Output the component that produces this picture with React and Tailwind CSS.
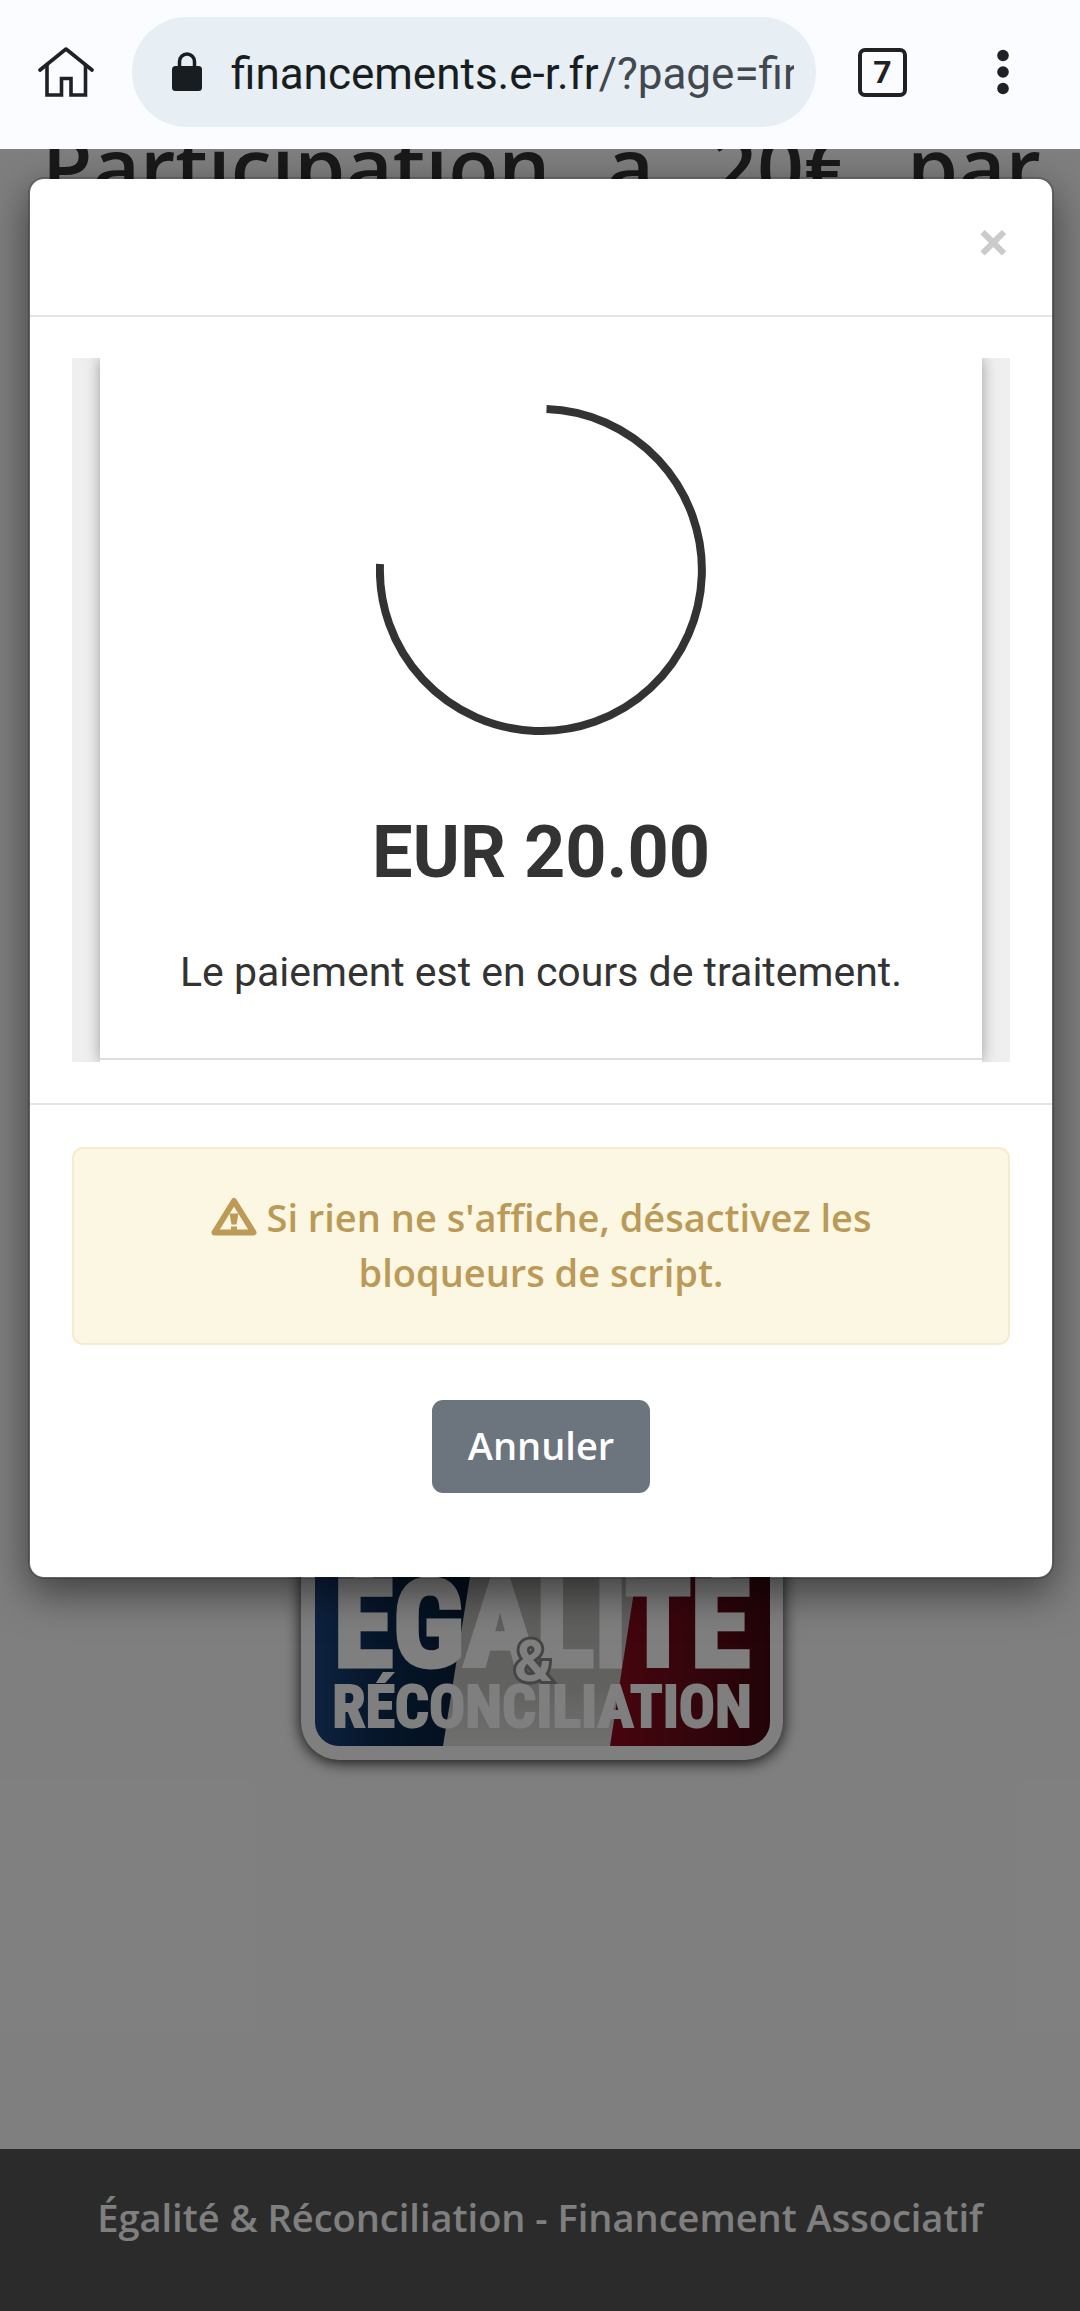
const sans = "font-['Open_Sans','Noto_Sans',sans-serif]";

function HomeIcon() {
  return (
    <svg className="h-14 w-14" viewBox="0 0 56 56" fill="none" stroke="#1f2123" strokeWidth="3.6" strokeLinecap="round" strokeLinejoin="round">
      <path d="M2 26 28 5 54 26" />
      <path d="M9 21V51H23.500V34.500H33V51H47.500V21" strokeLinecap="butt" strokeLinejoin="miter" />
    </svg>
  );
}

function LockIcon() {
  return (
    <svg className="h-10 w-8 shrink-0" viewBox="0 0 32 40" fill="none">
      <path d="M8.500 16V9.500a7.500 7.500 0 0 1 15 0V16" stroke="#171d20" strokeWidth="3.500" />
      <rect x="1" y="14" width="30" height="25" rx="3.500" fill="#171d20" />
    </svg>
  );
}

function MenuDots() {
  return (
    <svg className="h-12 w-3" viewBox="0 0 12 48" fill="#1f2123">
      <circle cx="6" cy="7.500" r="5.800" />
      <circle cx="6" cy="24" r="5.800" />
      <circle cx="6" cy="40.500" r="5.800" />
    </svg>
  );
}

function BrowserBar() {
  return (
    <header className="flex items-start bg-[#fbfcff] pt-[17px] pb-[22px] font-[Roboto,sans-serif]">
      <button type="button" aria-label="Accueil" className="ml-[38px] flex h-[110px] w-14 shrink-0 items-center">
        <HomeIcon />
      </button>
      <button type="button" aria-label="Adresse" className="ml-[38px] flex h-[110px] min-w-0 flex-1 items-center rounded-full bg-[#e7eef4] pr-[22px] pl-[39px]">
        <LockIcon />
        <span className="ml-7 overflow-hidden pt-[3px] text-[44px] leading-[56px] whitespace-nowrap text-[#171d20]">
          financements.e-r.fr<span className="text-[#41484e]">/?page=fir</span>
        </span>
      </button>
      <button type="button" aria-label="Onglets" className="ml-[42px] flex h-[110px] w-[49px] shrink-0 items-center">
        <span className="flex h-[49px] w-full items-center justify-center rounded-[7px] border-4 border-[#1f2123] text-[32px] leading-8 font-bold text-[#1f2123]">7</span>
      </button>
      <button type="button" aria-label="Menu" className="mr-[71px] ml-[90px] flex h-[110px] shrink-0 items-center">
        <MenuDots />
      </button>
    </header>
  );
}

function Logo() {
  return (
    <svg className="h-[260px] w-[482px] drop-shadow-[0_2px_8px_rgba(0,0,0,0.9)]" viewBox="0 0 482 260" role="img" aria-label="Égalité & Réconciliation">
      <defs>
        <linearGradient id="blue" x1="0" x2="1">
          <stop offset="0" stopColor="#1b4480" />
          <stop offset="0.4" stopColor="#0c2c52" />
          <stop offset="1" stopColor="#041c36" />
        </linearGradient>
        <linearGradient id="silver" x1="0" x2="0" y1="0" y2="1">
          <stop offset="0" stopColor="#b8b8b6" />
          <stop offset="0.75" stopColor="#c4c4c2" />
          <stop offset="1" stopColor="#e0e0df" />
        </linearGradient>
        <linearGradient id="red" x1="0" x2="1">
          <stop offset="0" stopColor="#900a1c" />
          <stop offset="0.5" stopColor="#6a0a18" />
          <stop offset="1" stopColor="#420810" />
        </linearGradient>
        <clipPath id="plate">
          <rect x="14" y="14" width="455" height="232" rx="24" />
        </clipPath>
      </defs>
      <rect width="482" height="260" rx="38" fill="#fff" />
      <g clipPath="url(#plate)">
        <rect x="14" y="14" width="455" height="232" fill="url(#silver)" />
        <path d="M14 14H179L142 246H14Z" fill="url(#blue)" />
        <path d="M345 14H469V246H309Z" fill="url(#red)" />
      </g>
      <g fill="#fff" stroke="#fff" fontWeight="700" textAnchor="middle" fontFamily="'Liberation Sans Narrow','Roboto Condensed',Roboto,sans-serif">
        <text x="241" y="166" fontSize="121" strokeWidth="5">ÉGALITÉ</text>
        <text x="241" y="227" fontSize="60" strokeWidth="2">RÉCONCILIATION</text>
        <text x="232" y="181" fontSize="58" stroke="#8a8a88" strokeWidth="6" paintOrder="stroke" fontFamily="Roboto,sans-serif">&amp;</text>
      </g>
    </svg>
  );
}

function Spinner() {
  return (
    <svg className="h-[330px] w-[330px]" viewBox="0 0 330 330" role="img" aria-label="Chargement">
      <path d="M170.500 4.100A161 161 0 1 1 4 159" fill="none" stroke="#333" strokeWidth="8" />
    </svg>
  );
}

function WarningIcon() {
  return (
    <svg className="mr-[10px] inline-block h-[39px] w-[46px] align-[-4px]" viewBox="0 0 46 39">
      <path d="M23 4 42.500 35.500H3.500Z" fill="none" stroke="#bd9a56" strokeWidth="6" strokeLinejoin="round" />
      <path d="M18.500 16.500H27.500L25.500 27.500H20.500ZM20 29.500H26V33H20Z" fill="#bd9a56" />
    </svg>
  );
}

function PaymentDialog() {
  return (
    <div role="dialog" aria-modal="true" aria-label="Paiement" className="rounded-2xl border-2 border-black/20 bg-white bg-clip-padding shadow-[0_14px_41px_rgba(0,0,0,0.5)]">
      <div className="flex justify-end border-b-2 border-[#e5e5e5] px-[42px] pt-[34px] pb-[46px]">
        <button type="button" aria-label="Fermer" className="text-[58px] leading-14 font-bold text-[#cbcbcb]">×</button>
      </div>
      <div className="px-[42px] py-[41px]">
        <section className="overflow-hidden bg-[#efefef] px-7">
          <div className="bg-white pb-[2px] shadow-[0_0_14px_rgba(0,0,0,0.35)]">
            <div className="flex flex-col items-center border-b-2 border-[#ddd] pt-[47px] pb-[58px] font-[Roboto,sans-serif] text-[#333]">
              <Spinner />
              <h2 className="mt-[76px] text-[72px] leading-[84px] font-bold">EUR 20.00</h2>
              <p className="mt-[49px] text-[41px] leading-14">Le paiement est en cours de traitement.</p>
            </div>
          </div>
        </section>
      </div>
      <div className="flex flex-col items-center border-t-2 border-[#e5e5e5] px-[42px] pt-[42px] pb-[84px]">
        <p role="alert" className="w-full rounded-[11px] border-2 border-[#f5ecd0] bg-[#fcf7e3] px-[110px] pt-[41px] pb-[43px] text-center text-[38px] leading-[55px] font-semibold text-[#bb9a58]">
          <WarningIcon />Si rien ne s'affiche, désactivez les bloqueurs de script.
        </p>
        <button type="button" className="mt-[55px] rounded-[11px] bg-[#6c757d] px-9 pt-[18px] pb-5 text-[38px] leading-[55px] font-semibold text-white">Annuler</button>
      </div>
    </div>
  );
}

export default function App() {
  return (
    <div className={`flex min-h-screen flex-col bg-white ${sans}`}>
      <BrowserBar />
      <div className="relative flex flex-1 flex-col overflow-hidden">
        <main className="flex flex-1 flex-col items-center pr-[39px] pl-[42px]">
          <h1 className="w-full text-[82px] leading-8 font-semibold text-[#333] [text-align-last:justify]">Participation à 20€ par</h1>
          <div className="mt-auto mb-[389px]">
            <Logo />
          </div>
        </main>
        <footer className="bg-[#565656] px-10 pt-[41px] pb-[66px] text-center text-[38px] leading-[55px] font-semibold text-white">
          Égalité &amp; Réconciliation - Financement Associatif
        </footer>
        <div className="absolute inset-0 bg-black/50 pt-7 pr-[26px] pl-7">
          <PaymentDialog />
        </div>
      </div>
    </div>
  );
}
